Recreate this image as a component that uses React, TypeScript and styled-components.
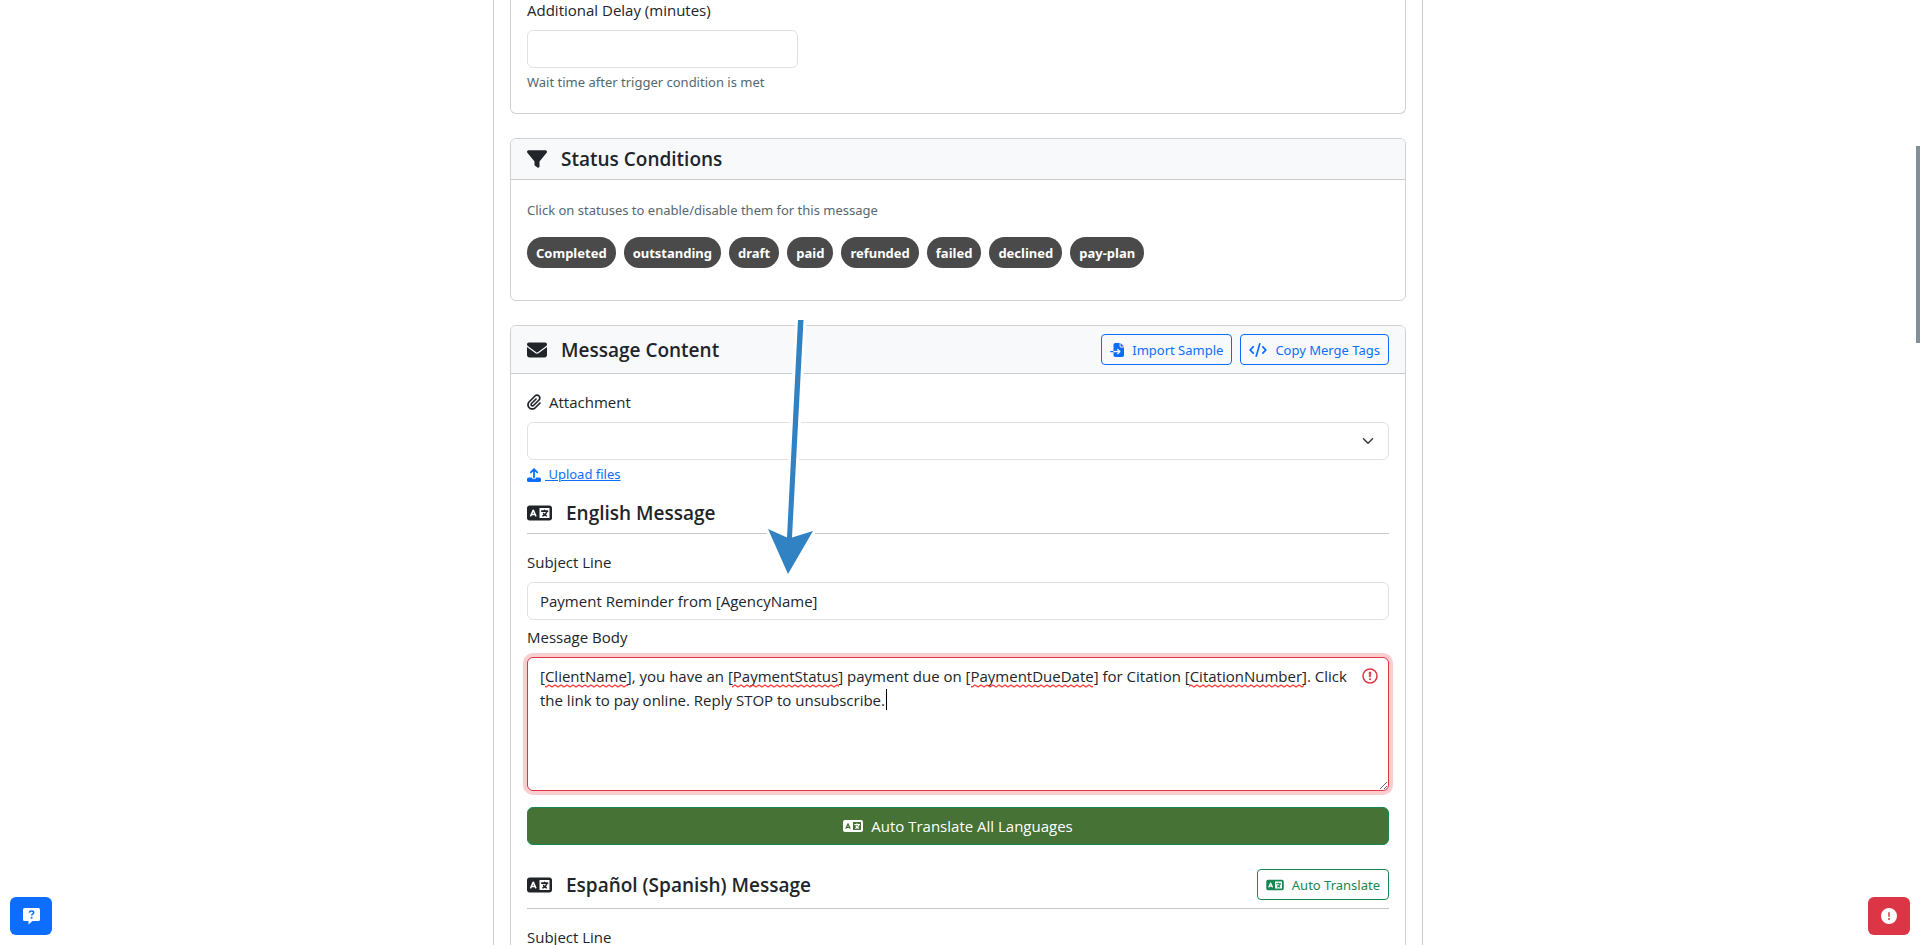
import React from 'react';
import styled, { createGlobalStyle, css } from 'styled-components';
import {
  FaCircleExclamation,
  FaCode,
  FaEnvelope,
  FaFileImport,
  FaFilter,
  FaLanguage,
  FaPaperclip,
} from 'react-icons/fa6';

const GlobalStyle = createGlobalStyle`
  *, *::before, *::after { box-sizing: border-box; }
  body {
    margin: 0;
    background: #fff;
    color: #212529;
    font: 400 15px/24px "Segoe UI", "Open Sans", "Noto Sans", sans-serif;
  }
  h2, h3, p { margin: 0; }
  button, input, select, textarea { font: inherit; color: inherit; }
`;

const smallFont = css`
  font-family: "Segoe UI", "Noto Sans", "Open Sans", sans-serif;
  font-size: 13px;
`;

const Viewport = styled.div`
  display: flex;
  height: 100vh;
  overflow: hidden;
`;

const Page = styled.main`
  flex: 1;
  min-width: 0;
  padding: 0 16px;
`;

const ScrollTrack = styled.div`
  width: 4px;
  padding-top: 146px;
`;

const ScrollThumb = styled.div`
  height: 197px;
  background: #829099;
`;

const Column = styled.div`
  position: relative;
  max-width: 930px;
  margin: 0 auto;
  padding: 0 16px;
  border: solid #ccc;
  border-width: 0 1px;
`;

const Card = styled.section<{ $continued?: boolean }>`
  margin-bottom: 24px;
  border: 1px solid #d0d1d2;
  border-radius: 6px;
  ${p => p.$continued && css`
    margin-top: -2px;
    border-top: 0;
    border-radius: 0 0 6px 6px;
  `}
`;

const CardHeader = styled.header`
  display: flex;
  align-items: center;
  justify-content: space-between;
  padding: 8px 16px;
  border-bottom: 1px solid #ccc;
  border-radius: 5px 5px 0 0;
  background: #f8f9fb;
`;

const CardBody = styled.div<{ $pad?: string }>`
  padding: ${p => p.$pad ?? '16px'};
`;

const Title = styled.h2`
  display: flex;
  align-items: center;
  gap: 14px;
  font-size: 19px;
  font-weight: 600;
  line-height: 24px;
`;

const SectionHead = styled.div<{ $top: number }>`
  display: flex;
  align-items: center;
  justify-content: space-between;
  margin: ${p => p.$top}px 0 16px;
  padding-bottom: 8px;
  border-bottom: 1px solid #c4c6c8;
`;

const IconBox = styled.span<{ $w: number; $h: number }>`
  display: flex;
  flex: none;
  svg {
    width: ${p => p.$w}px;
    height: ${p => p.$h}px;
  }
`;

const Label = styled.label`
  display: flex;
  align-items: center;
  gap: 8px;
  margin-bottom: 8px;
  line-height: 24px;
`;

const control = css`
  display: block;
  width: 100%;
  height: 38px;
  padding: 6px 12px;
  border: 1px solid #dee2e6;
  border-radius: 6px;
  background: #fff;
  outline: 0;
`;

const TextInput = styled.input`${control}`;

const HalfField = styled.div`
  width: 271px;
`;

const SelectWrap = styled.div`
  position: relative;
  svg {
    position: absolute;
    right: 15px;
    top: 13px;
    pointer-events: none;
  }
`;

const Select = styled.select`
  ${control}
  appearance: none;
`;

const Hint = styled.p`
  ${smallFont}
  color: #546870;
  line-height: 21px;
`;

const FieldHint = styled(Hint)`
  margin-top: 4px;
`;

const Pills = styled.div`
  display: flex;
  flex-wrap: wrap;
  gap: 8px;
  margin-top: 16px;
`;

const Pill = styled.button`
  ${smallFont}
  height: 31px;
  padding: 0 9px;
  border: 0;
  border-radius: 16px;
  background: #4a4a4a;
  color: #fff;
  font-weight: 700;
`;

const Actions = styled.div`
  display: flex;
  gap: 8px;
`;

const OutlineButton = styled.button<{ $color: string }>`
  ${smallFont}
  display: flex;
  align-items: center;
  gap: 8px;
  height: 31px;
  padding: 0 8px;
  border: 1px solid ${p => p.$color};
  border-radius: 4px;
  background: transparent;
  color: ${p => p.$color};
`;

const UploadLink = styled.a`
  ${smallFont}
  display: flex;
  align-items: center;
  gap: 4px;
  width: max-content;
  margin-top: 4px;
  color: #0d6efd;
  line-height: 21px;
  text-decoration: none;
  span { text-decoration: underline; white-space: pre; }
`;

const Stack = styled.div`
  margin-top: 5px;
`;

const BodyWrap = styled.div`
  position: relative;
`;

const BodyInput = styled.textarea`
  display: block;
  width: 100%;
  height: 134px;
  padding: 6px 36px 6px 12px;
  border: 1px solid #dc3545;
  border-radius: 6px;
  background: #fff;
  line-height: 24px;
  outline: 0;
  box-shadow: 0 0 0 4px #facdd1;
  resize: vertical;
  overflow: hidden;
`;

const InvalidMark = styled.span`
  position: absolute;
  right: 10px;
  top: 10px;
  display: flex;
`;

const Marks = styled.svg`
  position: absolute;
  left: 13px;
  top: 7px;
  pointer-events: none;
`;

const TranslateAll = styled.button`
  display: flex;
  align-items: center;
  justify-content: center;
  gap: 8px;
  width: 100%;
  height: 38px;
  margin-top: 16px;
  border: 1px solid #198754;
  border-radius: 6px;
  background: #467235;
  color: #fff;
`;

const Arrow = styled.svg`
  position: absolute;
  left: 267px;
  top: 318px;
  pointer-events: none;
`;

const FloatingButton = styled.button<{ $side: 'left' | 'right'; $color: string }>`
  position: fixed;
  bottom: 10px;
  ${p => p.$side}: 10px;
  display: grid;
  place-items: center;
  width: 42px;
  height: 38px;
  padding: 0;
  border: 0;
  border-radius: 6px;
  background: ${p => p.$color};
  color: #fff;
`;

const UploadIcon = () => (
  <svg width="14" height="14" viewBox="0 0 14 14" aria-hidden="true">
    <path d="M7 9.5V1.5M3.8 4.3 7 1.1l3.2 3.2" fill="none" stroke="currentColor" strokeWidth="1.8" strokeLinecap="round" strokeLinejoin="round" />
    <path d="M1.6 9.6h3.2a2.3 2.3 0 0 0 4.4 0h3.2A1.6 1.6 0 0 1 14 11.2v1.2a1.6 1.6 0 0 1-1.6 1.6H1.6A1.6 1.6 0 0 1 0 12.4v-1.2a1.6 1.6 0 0 1 1.6-1.6z" fill="currentColor" />
  </svg>
);

const Chevron = () => (
  <svg width="12" height="12" viewBox="0 0 16 16" aria-hidden="true">
    <path d="m2 5 6 6 6-6" fill="none" stroke="#343a40" strokeWidth="2" strokeLinecap="round" strokeLinejoin="round" />
  </svg>
);

const InvalidIcon = () => (
  <svg width="18" height="18" viewBox="0 0 18 18" aria-hidden="true">
    <circle cx="9" cy="9" r="7" fill="none" stroke="#dc3545" strokeWidth="1.5" />
    <path d="M8 5h2l-.4 5H8.4z" fill="#dc3545" stroke="#dc3545" strokeWidth=".5" strokeLinejoin="round" />
    <circle cx="9" cy="12.3" r="1" fill="#dc3545" />
  </svg>
);

const HelpIcon = () => (
  <svg width="17" height="17" viewBox="0 0 17 17" aria-hidden="true">
    <path d="M1.5 0h14A1.5 1.5 0 0 1 17 1.5v10a1.5 1.5 0 0 1-1.5 1.5h-6l-4 3.5V13h-4A1.5 1.5 0 0 1 0 11.5v-10A1.5 1.5 0 0 1 1.5 0z" fill="#fff" />
    <path d="M6.3 4.6c.2-1.1 1-1.6 2.2-1.6s2.2.6 2.2 1.7c0 1.4-2.1 1.4-2.1 2.8" fill="none" stroke="#0d6efd" strokeWidth="1.5" />
    <circle cx="8.6" cy="9.8" r="1" fill="#0d6efd" />
  </svg>
);

const misspelled = [
  { x: 5, width: 83 },
  { x: 192, width: 107 },
  { x: 431, width: 122 },
  { x: 649, width: 115 },
];

const SpellingMarks = () => (
  <Marks width="812" height="48" viewBox="0 0 812 48" aria-hidden="true">
    <defs>
      <pattern id="squiggle" width="6" height="4" patternUnits="userSpaceOnUse">
        <path d="M-1.5 3.5 0 3l3-2 3 2 1.5.5" fill="none" stroke="#f33" strokeWidth="1.3" />
      </pattern>
    </defs>
    {misspelled.map(m => (
      <rect key={m.x} x={m.x} y="20" width={m.width} height="4" fill="url(#squiggle)" />
    ))}
    <rect x="346" y="25" width="1" height="21" fill="#000" />
  </Marks>
);

const LanguageIcon = ({ height, width }: { height: number; width: number }) => (
  <IconBox $w={width} $h={height}><FaLanguage /></IconBox>
);

const statuses = ['Completed', 'outstanding', 'draft', 'paid', 'refunded', 'failed', 'declined', 'pay-plan'];

const message =
  '[ClientName], you have an [PaymentStatus] payment due on [PaymentDueDate] for Citation [CitationNumber]. Click the link to pay online. Reply STOP to unsubscribe.';

export default function App() {
  return (
    <>
      <GlobalStyle />
      <Viewport>
        <Page>
          <Column>
            <Card $continued>
              <CardBody $pad="0 16px 20px">
                <HalfField>
                  <Label htmlFor="delay">Additional Delay (minutes)</Label>
                  <TextInput id="delay" />
                </HalfField>
                <FieldHint>Wait time after trigger condition is met</FieldHint>
              </CardBody>
            </Card>

            <Card>
              <CardHeader>
                <Title><IconBox $w={20} $h={20}><FaFilter /></IconBox>Status Conditions</Title>
              </CardHeader>
              <CardBody $pad="20px 16px 32px">
                <Hint>Click on statuses to enable/disable them for this message</Hint>
                <Pills>
                  {statuses.map(s => <Pill key={s} type="button">{s}</Pill>)}
                </Pills>
              </CardBody>
            </Card>

            <Card>
              <CardHeader>
                <Title><IconBox $w={20} $h={20}><FaEnvelope /></IconBox>Message Content</Title>
                <Actions>
                  <OutlineButton type="button" $color="#0d6efd">
                    <IconBox $w={14} $h={14}><FaFileImport /></IconBox>Import Sample
                  </OutlineButton>
                  <OutlineButton type="button" $color="#0d6efd">
                    <IconBox $w={18} $h={14}><FaCode /></IconBox>Copy Merge Tags
                  </OutlineButton>
                </Actions>
              </CardHeader>
              <CardBody>
                <Label htmlFor="attachment"><IconBox $w={14} $h={16}><FaPaperclip /></IconBox>Attachment</Label>
                <SelectWrap>
                  <Select id="attachment" />
                  <Chevron />
                </SelectWrap>
                <UploadLink href="#upload"><UploadIcon /><span> Upload files</span></UploadLink>

                <SectionHead $top={16}>
                  <Title as="h3"><LanguageIcon width={25} height={20} />English Message</Title>
                </SectionHead>
                <Label htmlFor="subject-en">Subject Line</Label>
                <TextInput id="subject-en" defaultValue="Payment Reminder from [AgencyName]" />
                <Stack>
                  <Label htmlFor="body-en">Message Body</Label>
                  <BodyWrap>
                    <BodyInput id="body-en" defaultValue={message} spellCheck={false} aria-invalid="true" />
                    <SpellingMarks />
                    <InvalidMark><InvalidIcon /></InvalidMark>
                  </BodyWrap>
                </Stack>
                <TranslateAll type="button"><LanguageIcon width={20} height={16} />Auto Translate All Languages</TranslateAll>

                <SectionHead $top={24}>
                  <Title as="h3"><LanguageIcon width={25} height={20} />Español (Spanish) Message</Title>
                  <OutlineButton type="button" $color="#198754">
                    <LanguageIcon width={18} height={14} />Auto Translate
                  </OutlineButton>
                </SectionHead>
                <Label htmlFor="subject-es">Subject Line</Label>
                <TextInput id="subject-es" />
              </CardBody>
            </Card>

            <Arrow width="56" height="266" viewBox="0 0 56 266" aria-hidden="true">
              <path
                d="M37 4h5.5L31 221.5 52 215 27 258 7 213l19 8.5z"
                fill="#3182c3"
                stroke="#fff"
                strokeWidth="6"
                paintOrder="stroke"
              />
            </Arrow>
          </Column>
        </Page>
        <ScrollTrack><ScrollThumb /></ScrollTrack>
      </Viewport>
      <FloatingButton type="button" $side="left" $color="#0d6efd" aria-label="Help"><HelpIcon /></FloatingButton>
      <FloatingButton type="button" $side="right" $color="#dc3545" aria-label="Report a problem"><FaCircleExclamation size={16} /></FloatingButton>
    </>
  );
}
